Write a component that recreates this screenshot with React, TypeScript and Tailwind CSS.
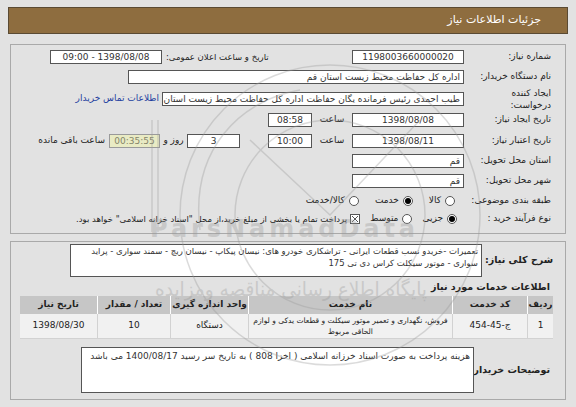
import type { ReactNode } from "react";

function Box({
  w,
  children,
  align = "center",
  className = "",
}: {
  w: string;
  children?: ReactNode;
  align?: "center" | "right";
  className?: string;
}) {
  return (
    <div
      className={`${w} h-[14px] shrink-0 overflow-hidden whitespace-nowrap border border-[#555] bg-white px-[3px] leading-[12px] text-[#333] ${
        align === "center" ? "text-center" : "text-right"
      } ${className}`}
    >
      {children}
    </div>
  );
}

function Label({ children }: { children: ReactNode }) {
  return <div className="w-[89px] shrink-0 whitespace-nowrap pr-[2px] text-right">{children}</div>;
}

function Radio({ on, label }: { on?: boolean; label: string }) {
  return (
    <div className="flex items-center gap-[4px] whitespace-nowrap">
      <span className="flex h-[10px] w-[10px] shrink-0 items-center justify-center rounded-full border border-[#555] bg-white">
        {on ? <span className="h-[6px] w-[6px] rounded-full bg-black" /> : null}
      </span>
      <span>{label}</span>
    </div>
  );
}

const cols = ["w-[26px]", "w-[75px]", "w-[204px]", "w-[78px]", "w-[73px]", "w-[77px]"];
const heads = ["ردیف", "کد خدمت", "نام خدمت", "واحد اندازه گیری", "تعداد / مقدار", "تاریخ نیاز"];

// faint site watermark drawn over the page
function Watermark() {
  return (
    <svg
      className="pointer-events-none absolute inset-0 opacity-35"
      width="576"
      height="407"
      viewBox="0 0 576 407"
      fill="none"
    >
      <g stroke="#9a9a9a" strokeWidth="1.5">
        <circle cx="330" cy="215" r="150" />
        <circle cx="330" cy="215" r="95" />
        <line x1="152" y1="120" x2="152" y2="232" />
        <line x1="158" y1="120" x2="158" y2="232" />
        <path d="M200 230 C 190 150, 240 100, 300 90" />
        <path d="M250 140 L 330 215 L 420 120" />
      </g>
      <text
        x="150"
        y="237"
        fontSize="24"
        fontWeight="bold"
        fill="#9a9a9a"
        direction="ltr"
        textLength="265"
        fontFamily="DejaVu Sans, sans-serif"
      >
        ParsNamadData
      </text>
      <text
        x="291"
        y="296"
        fontSize="20"
        fill="#9a9a9a"
        textAnchor="middle"
        direction="rtl"
        textLength="272"
        lengthAdjust="spacingAndGlyphs"
        fontFamily="DejaVu Sans, sans-serif"
      >
        پایگاه اطلاع رسانی مناقصه ومزایده
      </text>
    </svg>
  );
}

export default function App() {
  return (
    <div
      dir="rtl"
      className="relative h-[407px] w-[576px] overflow-hidden bg-[#e2e2e2] px-[8px] pt-[7px] text-[9px] text-[#222] [font-family:'DejaVu_Sans',sans-serif]"
    >
      <div className="flex h-[27px] items-center border border-[#5a4a33] bg-[#8e6d3f] pr-[26px] text-[11px] text-white">
        جزئیات اطلاعات نیاز
      </div>

      <div className="mx-[2px] mt-[10px] border border-[#a9a9a9] pb-[5px] pr-[12px] pt-[3px]">
        <div className="flex h-[18px] items-center">
          <Label>شماره نیاز:</Label>
          <Box w="w-[112px]">1198003660000020</Box>
          <div className="mr-auto whitespace-nowrap pl-[4px] text-[8.5px]">تاریخ و ساعت اعلان عمومی:</div>
          <Box w="w-[112px]" className="ml-[39px]">
            1398/08/08 - 09:00
          </Box>
        </div>
        <div className="flex h-[21px] items-center">
          <Label>نام دستگاه خریدار:</Label>
          <Box w="w-[336px]" align="right">
            اداره کل حفاظت محیط زیست استان قم
          </Box>
        </div>
        <div className="flex h-[23px] items-center">
          <Label>
            <div className="leading-[12px]">
              ایجاد کننده
              <br />
              درخواست:
            </div>
          </Label>
          <Box w="w-[302px]" align="right">
            طیب احمدی رئیس فرمانده یگان حفاظت اداره کل حفاظت محیط زیست استان قم
          </Box>
          <div className="mr-[3px] whitespace-nowrap text-[#1f3f9f]">اطلاعات تماس خریدار</div>
        </div>
        <div className="flex h-[20px] items-center">
          <Label>تاریخ ایجاد نیاز:</Label>
          <Box w="w-[112px]">1398/08/08</Box>
          <div className="w-[40px] shrink-0 text-center">ساعت</div>
          <Box w="w-[44px]">08:58</Box>
        </div>
        <div className="flex h-[21px] items-center">
          <Label>تاریخ اعتبار نیاز:</Label>
          <Box w="w-[112px]">1398/08/11</Box>
          <div className="w-[40px] shrink-0 text-center">ساعت</div>
          <Box w="w-[44px]">10:00</Box>
          <div className="w-[28px] shrink-0" />
          <Box w="w-[53px]">3</Box>
          <div className="w-[27px] shrink-0 whitespace-nowrap text-center">روز و</div>
          <div className="h-[14px] w-[51px] shrink-0 border border-[#9a9a9a] bg-[#e9ebc4] text-center leading-[12px] text-[#85856a]">
            00:35:55
          </div>
          <div className="mr-[4px] whitespace-nowrap">ساعت باقی مانده</div>
        </div>
        <div className="flex h-[20px] items-center">
          <Label>استان محل تحویل:</Label>
          <Box w="w-[112px]" align="right">
            قم
          </Box>
        </div>
        <div className="flex h-[20px] items-center">
          <Label>شهر محل تحویل:</Label>
          <Box w="w-[112px]" align="right">
            قم
          </Box>
        </div>
        <div className="flex h-[19px] items-center">
          <Label>طبقه بندی موضوعی:</Label>
          <div className="flex items-center gap-[16px] pr-[9px]">
            <Radio label="کالا" />
            <Radio on label="خدمت" />
            <Radio label="کالا/خدمت" />
          </div>
        </div>
        <div className="flex h-[18px] items-center">
          <Label>نوع فرآیند خرید :</Label>
          <div className="flex items-center gap-[10px] pr-[7px]">
            <Radio on label="جزیی" />
            <Radio label="متوسط" />
            <div className="flex items-center gap-[3px] whitespace-nowrap">
              <svg width="10" height="10" viewBox="0 0 10 10" className="shrink-0">
                <rect x="0.5" y="0.5" width="9" height="9" fill="#fff" stroke="#555" />
                <path d="M2 2 L8 8 M8 2 L2 8" stroke="#555" strokeWidth="1" />
              </svg>
              <span className="text-[8.5px]">
                پرداخت تمام یا بخشی از مبلغ خرید،از محل "اسناد خزانه اسلامی" خواهد بود.
              </span>
            </div>
          </div>
        </div>
      </div>

      <div className="mx-[2px] mt-[7px] h-[159px] border border-[#a9a9a9] pt-[2px]">
        <div className="flex items-center pr-[12px]">
          <div className="w-[71px] shrink-0 whitespace-nowrap text-right text-[9.5px] font-bold">شرح کلی نیاز:</div>
          <div className="h-[33px] w-[412px] shrink-0 border border-[#555] bg-white px-[3px] text-[8.5px] leading-[12px] text-[#333]">
            تعمیرات -خریدو  نسب قطعات ایرانی - تراشکاری خودرو های: نیسان پیکاپ - نیسان ریچ - سمند سواری - پراید سواری - موتور سیکلت کراس دی تی  175
          </div>
        </div>
        <div className="mt-[2px] h-[16px] pr-[15px] text-[9.5px] font-bold leading-[16px]">اطلاعات خدمات مورد نیاز</div>
        <div className="mr-[12px] mt-[1px] w-[533px]">
          <div className="flex h-[18px]">
            {heads.map((h, i) => (
              <div
                key={h}
                className={`${cols[i]} flex items-center justify-center whitespace-nowrap border-l border-white bg-[#c6c6c6] font-bold last:border-l-0`}
              >
                {h}
              </div>
            ))}
          </div>
          <div className="flex h-[25px] border-b border-[#d2d2d2] bg-[#f1f1f1]">
            <div className={`${cols[0]} flex items-center justify-center border-l border-[#d2d2d2]`}>1</div>
            <div className={`${cols[1]} flex items-center justify-center border-l border-[#d2d2d2]`}>ج-45-454</div>
            <div
              className={`${cols[2]} flex flex-col items-center justify-center whitespace-nowrap border-l border-[#d2d2d2] text-center text-[7.5px] leading-[11px]`}
            >
              <span>فروش، نگهداری و تعمیر موتور سیکلت و قطعات یدکی و لوازم</span>
              <span>الحاقی مربوط</span>
            </div>
            <div className={`${cols[3]} flex items-center justify-center border-l border-[#d2d2d2]`}>دستگاه</div>
            <div className={`${cols[4]} flex items-center justify-center border-l border-[#d2d2d2]`}>10</div>
            <div className={`${cols[5]} flex items-center justify-center`}>1398/08/30</div>
          </div>
        </div>
        <div className="mt-[8px] flex items-center pr-[15px]">
          <div className="w-[76px] shrink-0 whitespace-nowrap text-right text-[9.5px] font-bold">توضیحات خریدار:</div>
          <div className="h-[46px] w-[393px] shrink-0 border border-[#555] bg-white px-[3px] pt-[2px] leading-[12px] text-[#333]">
            هزینه پرداخت به صورت اسناد خرزانه اسلامی ( اخزا 808 ) به تاریخ سر رسید 1400/08/17 می باشد
          </div>
        </div>
      </div>

      <Watermark />
    </div>
  );
}
